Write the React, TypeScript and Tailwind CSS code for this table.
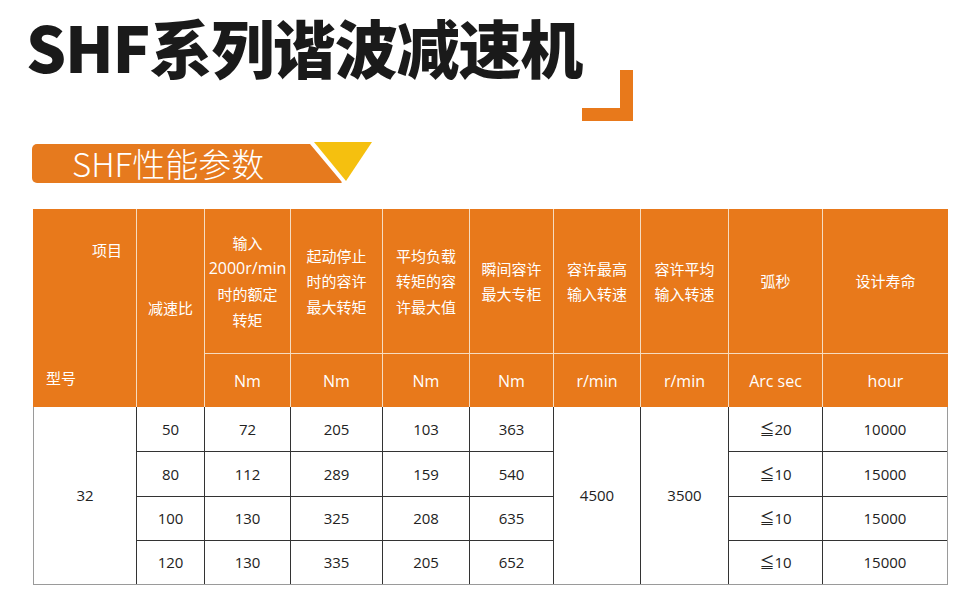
const cjk = "font-['Noto_Sans_CJK_SC',sans-serif]";
const num = "font-['Open_Sans','Noto_Sans_CJK_SC',sans-serif]";

const heads = [
  { lines: ["输入", "2000r/min", "时的额定", "转矩"], unit: "Nm" },
  { lines: ["起动停止", "时的容许", "最大转矩"], unit: "Nm" },
  { lines: ["平均负载", "转矩的容", "许最大值"], unit: "Nm" },
  { lines: ["瞬间容许", "最大专柜"], unit: "Nm" },
  { lines: ["容许最高", "输入转速"], unit: "r/min" },
  { lines: ["容许平均", "输入转速"], unit: "r/min" },
  { lines: ["弧秒"], unit: "Arc sec" },
  { lines: ["设计寿命"], unit: "hour" },
];

const rows = [
  ["50", "72", "205", "103", "363", "≦20", "10000"],
  ["80", "112", "289", "159", "540", "≦10", "15000"],
  ["100", "130", "325", "208", "635", "≦10", "15000"],
  ["120", "130", "335", "205", "652", "≦10", "15000"],
];

function Title() {
  return (
    <div className="w-[633px] pl-[26px] pt-[11px]">
      <h1 className={`${cjk} whitespace-nowrap text-[63px] font-black leading-[70px] text-[#1a1a1a] tracking-[-1.2px]`}>
        SHF系列谐波减速机
      </h1>
      <div className="flex justify-end -mt-[11px]">
        <svg width="51" height="51" viewBox="0 0 51 51">
          <path d="M38 0H51V51H0V38H38Z" fill="#e8791b" />
        </svg>
      </div>
    </div>
  );
}

function Tab() {
  return (
    <div className="flex items-start mt-[21px] ml-[32px]">
      <div className={`${cjk} mt-[2px] h-[39px] w-[278px] whitespace-nowrap rounded-l-[5px] bg-[#e67a1e] pl-[40px] text-[33px] font-light leading-[39px] text-white`}>
        SHF性能参数
      </div>
      <svg width="62" height="41" viewBox="0 0 62 41">
        <path d="M0 2L31 39Q33 41 30 41H0Z" fill="#e67a1e" />
        <path d="M4 0H62L36 39Z" fill="#f5c00f" />
      </svg>
    </div>
  );
}

function Header() {
  return (
    <div className={`${cjk} grid grid-cols-[103px_67px_85px_91px_86px_83px_86px_87px_93px_125px] grid-rows-[144px_53px] gap-px bg-[#f6dcc0] text-white`}>
      <div className="row-span-2 flex flex-col justify-between bg-[#e8791b] pt-[30px] pb-[18px] text-[15px]">
        <span className="self-end pr-[14px]">项目</span>
        <span className="self-start pl-[13px]">型号</span>
      </div>
      <div className="row-span-2 flex items-center justify-center bg-[#e8791b] text-[15px]">减速比</div>
      {heads.map((h, i) => (
        <div key={i} className="flex flex-col items-center justify-center bg-[#e8791b] text-[15px] leading-[25.5px]">
          {h.lines.map((l) => (
            <span key={l} className={l.includes("r/min") ? `${num} text-[16px]` : ""}>{l}</span>
          ))}
        </div>
      ))}
      {heads.map((h, i) => (
        <div key={"u" + i} className={`${num} flex items-center justify-center bg-[#e8791b] text-[16px]`}>
          {h.unit}
        </div>
      ))}
    </div>
  );
}

function Body() {
  return (
    <div className={`${num} grid grid-cols-[102px_67px_85px_91px_86px_83px_86px_87px_93px_124px] grid-rows-[44px_44px_43px_43px] gap-px border-x border-b border-[#9a9a9a] bg-[#333] text-[15px] text-[#222]`}>
      <div className="row-span-4 flex items-center justify-center bg-white">32</div>
      {rows.map((r, i) => (
        <>
          {r.slice(0, 5).map((v, j) => (
            <div key={`${i}-${j}`} className="flex items-center justify-center bg-white">{v}</div>
          ))}
          {i === 0 && (
            <>
              <div className="row-span-4 flex items-center justify-center bg-white">4500</div>
              <div className="row-span-4 flex items-center justify-center bg-white">3500</div>
            </>
          )}
          {r.slice(5).map((v, j) => (
            <div key={`${i}-b${j}`} className="flex items-center justify-center bg-white">{v}</div>
          ))}
        </>
      ))}
    </div>
  );
}

export default function App() {
  return (
    <div className="h-[593px] w-[973px] overflow-hidden bg-white">
      <Title />
      <Tab />
      <div className="ml-[33px] mt-[26px] w-[915px]">
        <Header />
        <Body />
      </div>
    </div>
  );
}
